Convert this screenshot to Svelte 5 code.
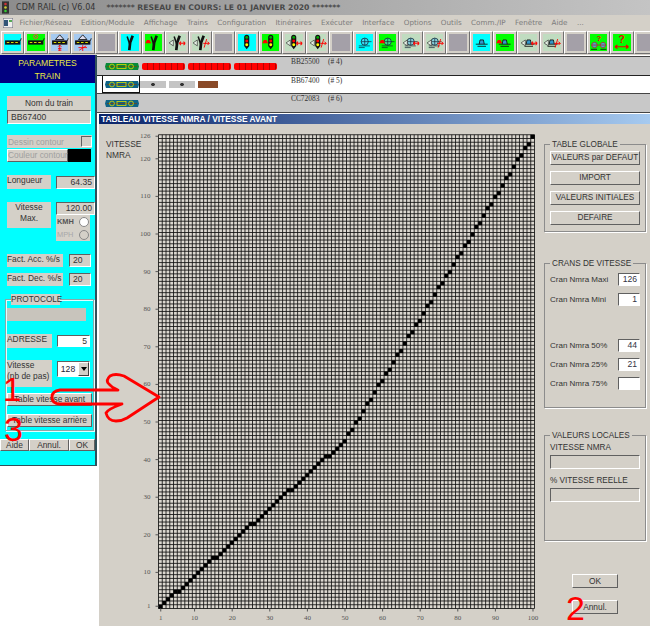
<script lang="ts">
	const menus = ['Fichier/Réseau', 'Edition/Module', 'Affichage', 'Trains', 'Configuration', 'Itinéraires', 'Exécuter', 'Interface', 'Options', 'Outils', 'Comm./IP', 'Fenêtre', 'Aide', '...'];

	// kind + tile colour + red overlay for each toolbar button
	const tools = [
		{ kind: 'loco', tile: 'cyan' },
		{ kind: 'loco', tile: 'green', over: 'stop' },
		{ kind: 'loco', tile: 'blue', over: 'up' },
		{ kind: 'loco', tile: 'blue', over: 'upx' },
		{ kind: 'none', tile: 'blank' },
		{ kind: 'point', tile: 'cyan' },
		{ kind: 'point', tile: 'green', over: 'hump' },
		{ kind: 'point', tile: 'sage', over: 'arrows' },
		{ kind: 'point', tile: 'sage', over: 'cross' },
		{ kind: 'none', tile: 'blank' },
		{ kind: 'signal', tile: 'cyan' },
		{ kind: 'signal', tile: 'green', over: 'hump' },
		{ kind: 'signal', tile: 'sage', over: 'arrows' },
		{ kind: 'signal', tile: 'sage', over: 'cross' },
		{ kind: 'none', tile: 'blank' },
		{ kind: 'wheel', tile: 'cyan' },
		{ kind: 'wheel', tile: 'green', over: 'hump' },
		{ kind: 'wheel', tile: 'sage', over: 'arrows' },
		{ kind: 'wheel', tile: 'sage', over: 'cross' },
		{ kind: 'none', tile: 'blank' },
		{ kind: 'bridge', tile: 'cyan' },
		{ kind: 'bridge', tile: 'green', over: 'hump' },
		{ kind: 'bridge', tile: 'sage', over: 'arrows' },
		{ kind: 'bridge', tile: 'sage', over: 'cross' },
		{ kind: 'none', tile: 'blank' },
		{ kind: 'wheels', tile: 'green' },
		{ kind: 'quest', tile: 'green' },
		{ kind: 'none', tile: 'blank' }
	];

	const step = 3.76;
	const left = 59.5;
	const bottom = 484.5;
	const top = bottom - 126 * step;
	const right = left + 100 * step;

	let grid = '';
	for (let i = 0; i <= 100; i++) grid += `M${left + i * step} ${top}V${bottom}`;
	for (let i = 0; i <= 126; i++) grid += `M${left} ${bottom - i * step}H${right}`;

	// speed curve, read off the picture
	const knots = [[1, 1], [10, 9], [20, 18], [30, 27], [40, 36], [50, 45], [100, 126]];
	function speed(x: number): number {
		for (let k = 1; k < knots.length; k++) {
			if (x <= knots[k][0]) {
				const [x0, y0] = knots[k - 1];
				const [x1, y1] = knots[k];
				return Math.round(y0 + ((x - x0) * (y1 - y0)) / (x1 - x0));
			}
		}
		return 126;
	}
	const cells = Array.from({ length: 100 }, (_, i) => ({ x: i + 1, y: speed(i + 1) }));

	const xTicks = [1, 10, 20, 30, 40, 50, 60, 70, 80, 90, 100];
	const yTicks = [1, 10, 20, 30, 40, 50, 60, 70, 80, 90, 100, 110, 120, 126];
	const xPos = (v: number) => left + (v - 0.4) * step;
	const yPos = (v: number) => bottom - (v - 0.4) * step;

	const crans = [
		{ label: 'Cran Nmra Maxi', value: '126', cls: 'c1' },
		{ label: 'Cran Nmra Mini', value: '1', cls: 'c2' },
		{ label: 'Cran Nmra 50%', value: '44', cls: 'c3' },
		{ label: 'Cran Nmra 25%', value: '21', cls: 'c4' },
		{ label: 'Cran Nmra 75%', value: '', cls: 'c4' }
	];
</script>

{#snippet overlay(over)}
	{#if over === 'hump'}
		<path d="M0 11 L2 7 H5 L7 11 Z" fill="#f00" />
	{:else if over === 'arrows'}
		<path d="M13 11H20M13 11l2-2M13 11l2 2M20 11l-2-2M20 11l-2 2" stroke="#f00" fill="none" stroke-width="1.2" />
		<path d="M6 7 L1 10.5 L6 14 Z" stroke="#333" fill="#e4f0e4" stroke-width="0.8" />
	{:else if over === 'cross'}
		<path d="M13 11H20M20 11l-2-2M20 11l-2 2M17 6 L14 16" stroke="#f00" fill="none" stroke-width="1.1" />
		<path d="M6 7 L1 10.5 L6 14 Z" stroke="#333" fill="#e4f0e4" stroke-width="0.8" />
	{:else if over === 'up'}
		<path d="M10 13V20M8 15l2-2l2 2M8 17H12M8 19H12" stroke="#f00" fill="none" />
	{:else if over === 'upx'}
		<path d="M10 13V20M5 16H15M14 14L6 19" stroke="#f00" fill="none" />
	{:else if over === 'stop'}
		<circle cx="10" cy="3" r="2.5" stroke="#e44" fill="none" />
		<path d="M8 1.5 L12 4.5" stroke="#e44" stroke-width="0.7" />
	{/if}
{/snippet}

{#snippet icon(tool)}
	<svg viewBox="0 0 20 20" class="tool-icon" aria-hidden="true">
		{#if tool.kind === 'loco'}
			{#if tool.over === 'up' || tool.over === 'upx'}
				<path d="M10 1 L5 6.5 H15 Z" fill="#dde" stroke="#111" />
			{/if}
			<rect x="1" y="7.5" width="18" height="5" fill="#111" />
			<path d="M19 8 L20 5" stroke="#111" />
			<path d="M3 10H6M8 10H11M13 10H16" stroke="#dd0" stroke-width="1.2" />
		{:else if tool.kind === 'point'}
			<path d="M9.5 19 L10.5 10 L13.5 2" fill="none" stroke="#111" stroke-width="3.2" />
			<path d="M7 3 L10 12" fill="none" stroke="#111" stroke-width="1.8" />
		{:else if tool.kind === 'signal'}
			<path d="M7 4 Q7 1 10 1 Q13 1 13 4 V14 L10 18 L7 14 Z" fill="#111" />
			<circle cx="10" cy="4" r="1.7" fill="#0a0" />
			<circle cx="10" cy="8.3" r="1.7" fill="#f00" />
			<circle cx="10" cy="12.6" r="1.7" fill="#ff0" />
		{:else if tool.kind === 'wheel'}
			<circle cx="10" cy="9" r="4.2" fill="#6ce" fill-opacity="0.6" stroke="#123" stroke-width="0.9" />
			<path d="M3 14H16M6 9H18M3 16H10M10 5V13" stroke="#123" fill="none" stroke-width="0.8" />
		{:else if tool.kind === 'bridge'}
			<path d="M7 12 L8 7 H12 L13 12" fill="#39c" stroke="#111" />
			<path d="M3 12H17M5 14.5H15" stroke="#111" />
		{:else if tool.kind === 'wheels'}
			<circle cx="5" cy="13" r="3.2" fill="#4ac" stroke="#a33" />
			<circle cx="15" cy="13" r="3.2" fill="#4ac" stroke="#a33" />
			<path d="M1 13H19" stroke="#a33" />
			<path d="M1 18H8M12 18H19" stroke="#111" />
			<text x="10" y="8" class="quest small">?</text>
		{:else if tool.kind === 'quest'}
			<text x="10" y="11" class="quest">?</text>
			<path d="M2 15H18M2 15l3-2M2 15l3 2M18 15l-3-2M18 15l-3 2" stroke="#e00" fill="none" stroke-width="1.4" />
		{/if}
		{@render overlay(tool.over)}
	</svg>
{/snippet}

{#snippet pill(color)}
	<svg class="pill" viewBox="0 0 34 7" aria-hidden="true">
		<path d="M1 0H33L34 3.5L33 7H1L0 3.5Z" fill={color} />
		<path d="M2 3.5H32" stroke="#8a3a00" stroke-width="0.6" />
		<circle cx="7" cy="3.5" r="2.4" fill="none" stroke="#dd0" stroke-width="0.8" />
		<rect x="12" y="1.5" width="9" height="4" fill="none" stroke="#dd0" stroke-width="0.8" />
		<circle cx="26" cy="3.5" r="2.4" fill="none" stroke="#dd0" stroke-width="0.8" />
	</svg>
{/snippet}

<div class="screen">
	<div class="title-bar">
		<svg class="app-icon" viewBox="0 0 8 14" aria-hidden="true">
			<rect width="8" height="14" fill="#333" />
			<circle cx="4" cy="3" r="1.5" fill="#c33" />
			<circle cx="4" cy="7" r="1.5" fill="#cc3" />
			<circle cx="4" cy="11" r="1.5" fill="#3c3" />
		</svg>
		<span class="app-name">CDM RAIL (c) V6.04</span>
		<span class="app-state">******* RESEAU EN COURS: LE 01 JANVIER 2020 *******</span>
	</div>

	<div class="menu-bar">
		<svg class="menu-icon" viewBox="0 0 10 10" aria-hidden="true">
			<rect width="10" height="10" fill="#eee" stroke="#667" />
			<rect x="1" y="2" width="4" height="6" fill="#357" />
			<rect x="6" y="2" width="3" height="2" fill="#5a5" />
		</svg>
		{#each menus as item}
			<span class="menu-item">{item}</span>
		{/each}
	</div>

	<div class="toolbar">
		{#each tools as tool}
			<div class="tool">
				<div class="tile {tool.tile}">
					{#if tool.kind !== 'none'}
						{@render icon(tool)}
					{/if}
				</div>
			</div>
		{/each}
	</div>

	<div class="main">
		<aside class="panel">
			<header class="panel-head">PARAMETRES<br />TRAIN</header>
			<div class="panel-body">
				<div class="lbl center name-label">Nom du train</div>
				<div class="field name-input">BB67400</div>

				<div class="contour off">
					<span>Dessin contour</span>
					<span class="check"></span>
				</div>
				<div class="colour">
					<div class="btn off colour-btn">Couleur contour</div>
					<div class="swatch"></div>
				</div>

				<div class="line len">
					<div class="lbl w45">Longueur</div>
					<div class="field right len-input">64.35</div>
				</div>

				<div class="line vmax">
					<div class="lbl w45 center tall">Vitesse<br />Max.</div>
					<div class="vcol">
						<div class="field right len-input">120.00</div>
						<div class="radios">
							<div class="radio-row">KMH<span class="radio on"></span></div>
							<div class="radio-row off">MPH<span class="radio"></span></div>
						</div>
					</div>
				</div>

				<div class="line fact first">
					<div class="lbl w56">Fact. Acc. %/s</div>
					<div class="field small-input">20</div>
				</div>
				<div class="line fact second">
					<div class="lbl w56">Fact. Dec. %/s</div>
					<div class="field small-input">20</div>
				</div>

				<div class="proto">
					<div class="proto-legend">PROTOCOLE</div>
					<div class="proto-bar"></div>
					<div class="line addr">
						<div class="lbl w45">ADRESSE</div>
						<div class="field white right addr-input">5</div>
					</div>
					<div class="line steps">
						<div class="lbl w45 tall">Vitesse<br />(nb de pas)</div>
						<div class="combo">
							<span class="combo-val">128</span>
							<span class="combo-btn"></span>
						</div>
					</div>
					<div class="btn wide table-a">Table vitesse avant</div>
					<div class="btn wide table-b">Table vitesse arrière</div>
				</div>

				<div class="panel-foot">
					<div class="btn f1">Aide</div>
					<div class="btn f2">Annul.</div>
					<div class="btn f3">OK</div>
				</div>
			</div>
		</aside>

		<div class="work">
			<div class="train-row first-row">
				<div class="cars">
					{@render pill('#0a8a3a')}
					<span class="red-car"></span>
					<span class="red-car"></span>
					<span class="red-car"></span>
				</div>
				<span class="tname">BB25500</span>
				<span class="tnum">(# 4)</span>
			</div>
			<div class="train-row sel">
				<div class="cars">
					<div class="sel-box">{@render pill('#0f6487')}</div>
					<span class="wagon"></span>
					<span class="wagon"></span>
					<span class="brown"></span>
				</div>
				<span class="tname">BB67400</span>
				<span class="tnum">(# 5)</span>
			</div>
			<div class="train-row last">
				<div class="cars">{@render pill('#0f6487')}</div>
				<span class="tname">CC72083</span>
				<span class="tnum">(# 6)</span>
			</div>

			<section class="window">
				<div class="win-title">TABLEAU VITESSE NMRA / VITESSE AVANT</div>
				<div class="win-body">
					<svg class="chart" viewBox="0 0 445 502" width="445" height="502" aria-label="Courbe vitesse">
						<text x="7" y="23" class="axis-name">VITESSE</text>
						<text x="7" y="34" class="axis-name">NMRA</text>
						<rect x={left} y={top} width={right - left} height={bottom - top} fill="#dcd8d0" />
						<path d={grid} stroke="#111" stroke-width="0.85" fill="none" />
						{#each cells as cell}
							<rect x={left + (cell.x - 1) * step} y={bottom - cell.y * step} width={step + 0.2} height={step + 0.2} fill="#000" />
						{/each}
						{#each xTicks as t}
							<path d="M{xPos(t)} {bottom}v3" stroke="#555" />
							<text x={xPos(t)} y={bottom + 11} class="tick mid">{t}</text>
						{/each}
						{#each yTicks as t}
							<path d="M{left - 3} {yPos(t)}h3" stroke="#555" />
							<text x={left - 8} y={yPos(t) + 2} class="tick end">{t}</text>
						{/each}
					</svg>

					<div class="side">
						<fieldset class="box global">
							<legend>TABLE GLOBALE</legend>
							<div class="btn big">VALEURS par DEFAUT</div>
							<div class="btn big">IMPORT</div>
							<div class="btn big">VALEURS INITIALES</div>
							<div class="btn big">DEFAIRE</div>
						</fieldset>

						<fieldset class="box crans">
							<legend>CRANS DE VITESSE</legend>
							{#each crans as c}
								<div class="cran {c.cls}">
									<span>{c.label}</span>
									<div class="field white right cran-input">{c.value}</div>
								</div>
							{/each}
						</fieldset>

						<fieldset class="box locales">
							<legend>VALEURS LOCALES</legend>
							<div class="loc-label">VITESSE NMRA</div>
							<div class="field loc-field"></div>
							<div class="loc-label second-loc">% VITESSE REELLE</div>
							<div class="field loc-field"></div>
						</fieldset>

						<div class="btn act ok">OK</div>
						<div class="btn act annul">Annul.</div>
					</div>
				</div>
			</section>
		</div>
	</div>

	<!-- red annotations drawn over the screenshot -->
	<svg class="arrow" viewBox="0 0 650 626" aria-hidden="true">
		<path d="M118 390 H60 Q52 391 52 397 Q52 404 60 404 H122 Q108 409 106 413 Q108 421 116 421 Q122 421 127 418 L159 397 L124 376 Q115 373 110 376 Q106 380 108 383 Q112 388 118 390 Z" fill="none" stroke="#f00" stroke-width="2.8" stroke-linejoin="round" />
	</svg>
	<span class="mark m1">1</span>
	<span class="mark m3">3</span>
	<span class="mark m2">2</span>
</div>

<style>
	:global(body) {
		margin: 0;
		background: #fff;
	}

	.screen {
		position: relative;
		width: 650px;
		height: 626px;
		overflow: hidden;
		background: #fff;
		font-family: "Liberation Sans", Arial, sans-serif;
		font-size: 9px;
		color: #333;
	}

	.title-bar {
		height: 15px;
		display: flex;
		align-items: center;
		background: linear-gradient(90deg, #8c8c8c, #c4c4c4);
		font-family: "DejaVu Sans", sans-serif;
		font-size: 8px;
		white-space: nowrap;
	}

	.app-icon {
		width: 7px;
		height: 13px;
		margin: 0 7px 0 2px;
	}

	.app-name {
		color: #333;
		letter-spacing: 0.1px;
	}

	.app-state {
		margin-left: 11px;
		color: #484848;
		font-size: 7.7px;
		font-weight: bold;
	}

	.menu-bar {
		height: 15px;
		display: flex;
		align-items: center;
		gap: 9.4px;
		background: #d4d0c8;
		color: #7c7c7c;
		font-family: "DejaVu Sans", sans-serif;
		font-size: 7.2px;
		white-space: nowrap;
	}

	.menu-icon {
		width: 10px;
		height: 10px;
		margin: 0 -3px 0 3px;
	}

	.toolbar {
		height: 25px;
		display: flex;
		padding: 1px 0 0 1px;
		background: #d4d0c8;
		box-sizing: border-box;
	}

	.tool {
		flex: 0 0 23.45px;
		box-sizing: border-box;
		height: 23px;
		border: 1px solid;
		border-color: #fff #707070 #707070 #fff;
		padding: 2px;
	}

	.tile {
		width: 100%;
		height: 100%;
	}

	.cyan { background: #00ffff; }
	.green { background: #00ff00; }
	.blue { background: #a6caf0; }
	.sage { background: #c0dcc0; }
	.blank { background: #a4a0a8; }

	.tool-icon {
		display: block;
		width: 100%;
		height: 100%;
		overflow: visible;
	}

	.quest {
		font-family: "Liberation Sans", sans-serif;
		font-size: 12px;
		font-weight: bold;
		fill: #e00;
		text-anchor: middle;
	}

	.quest.small {
		font-size: 9px;
	}

	.main {
		display: flex;
		align-items: flex-start;
	}

	.panel {
		flex: 0 0 95px;
		width: 95px;
		height: 410px;
		box-sizing: content-box;
		background: #00ffff;
		border-right: 2px solid #30505a;
		border-bottom: 1px solid #30505a;
	}

	.panel-head {
		height: 28px;
		padding-top: 2px;
		box-sizing: border-box;
		background: #000080;
		color: #e8e840;
		text-align: center;
		font-size: 8.6px;
		line-height: 13px;
	}

	.panel-body {
		padding-left: 7px;
	}

	.lbl {
		box-sizing: border-box;
		background: #d4d0c8;
		font-size: 8.4px;
		line-height: 11px;
		white-space: nowrap;
	}

	.center { text-align: center; }
	.w45 { width: 45px; height: 14px; }
	.w56 { width: 56px; height: 13px; }
	.tall { height: 26px; }

	.field {
		box-sizing: border-box;
		background: #d4d0c8;
		border: 1px solid;
		border-color: #606060 #fff #fff #606060;
		padding: 0 2px;
		font-size: 8.6px;
		line-height: 11px;
		white-space: nowrap;
	}

	.white { background: #fff; }
	.right { text-align: right; }

	.name-label {
		margin-top: 13px;
		width: 84px;
		height: 14px;
		line-height: 14px;
	}

	.name-input {
		width: 84px;
		height: 14px;
		padding-left: 3px;
		line-height: 12px;
	}

	.off { color: #a0a0a0; }

	.contour {
		margin-top: 11px;
		width: 85px;
		height: 13px;
		display: flex;
		justify-content: space-between;
		align-items: center;
		padding-left: 1px;
		box-sizing: border-box;
		background: #d4d0c8;
		font-size: 8.4px;
	}

	.check {
		width: 9px;
		height: 9px;
		border: 1px solid;
		border-color: #606060 #fff #fff #606060;
	}

	.colour {
		margin-top: 1px;
		display: flex;
		height: 13px;
		width: 84px;
	}

	.colour-btn {
		width: 61px;
	}

	.swatch {
		flex: 1;
		background: #000;
	}

	.btn {
		box-sizing: border-box;
		background: #d4d0c8;
		border: 1px solid;
		border-color: #fff #606060 #606060 #fff;
		text-align: center;
		font-size: 8.4px;
		line-height: 11px;
		white-space: nowrap;
	}

	.line {
		display: flex;
		align-items: flex-start;
	}

	.len {
		margin-top: 13px;
	}

	.len-input {
		margin: 1px 0 0 5px;
		width: 39px;
		height: 13px;
	}

	.vmax {
		margin-top: 13px;
	}

	.vcol {
		margin-left: 5px;
		width: 39px;
	}

	.vcol .len-input {
		margin: 0;
	}

	.radios {
		width: 34px;
		height: 26px;
		background: #d4d0c8;
	}

	.radio-row {
		height: 13px;
		display: flex;
		justify-content: space-between;
		align-items: center;
		padding: 0 1px;
		font-size: 7.4px;
		font-weight: bold;
		color: #555;
	}

	.radio-row.off {
		color: #a8a8a8;
		font-weight: normal;
	}

	.radio {
		width: 8px;
		height: 8px;
		border-radius: 50%;
		border: 1px solid #888;
	}

	.radio.on {
		background: #fff;
	}

	.fact.first {
		margin-top: 13px;
	}

	.fact.second {
		margin-top: 6px;
	}

	.small-input {
		margin-left: 6px;
		width: 22px;
		height: 13px;
		padding-left: 3px;
	}

	.proto {
		margin: 13px 0 0 -2px;
		width: 89px;
		height: 132px;
		box-sizing: border-box;
		border: 1px solid #8aa8a8;
		box-shadow: 1px 1px 0 #e0ffff, inset 1px 1px 0 #e0ffff;
		padding-left: 1px;
	}

	.proto-legend {
		margin: -6px 0 0 4px;
		width: 49px;
		height: 11px;
		background: #d4d0c8;
		text-align: center;
		font-size: 8.2px;
		line-height: 11px;
	}

	.proto-bar {
		margin-top: 3px;
		width: 79px;
		height: 13px;
		background: #c8c4bc;
	}

	.addr {
		margin-top: 13px;
	}

	.addr-input {
		margin: 1px 0 0 5px;
		width: 33px;
		height: 12px;
	}

	.steps {
		margin-top: 12px;
	}

	.steps .tall {
		height: 27px;
	}

	.combo {
		margin: 1px 0 0 5px;
		width: 33px;
		height: 16px;
		box-sizing: border-box;
		display: flex;
		align-items: center;
		background: #fff;
		font-size: 8.6px;
		color: #223;
		border: 1px solid;
		border-color: #606060 #fff #fff #606060;
	}

	.combo-val {
		flex: 1;
		text-align: center;
	}

	.combo-btn {
		position: relative;
		width: 11px;
		height: 14px;
		box-sizing: border-box;
		background: #d4d0c8;
		border: 1px solid;
		border-color: #fff #404040 #404040 #fff;
	}

	.combo-btn::after {
		content: "";
		position: absolute;
		left: 1.5px;
		top: 4px;
		border: 3px solid transparent;
		border-top: 4px solid #000;
		border-bottom: 0;
	}

	.wide {
		width: 85px;
		height: 13px;
	}

	.table-a {
		margin-top: 6px;
	}

	.table-b {
		margin-top: 8px;
	}

	.panel-foot {
		margin: 8px 0 0 -7px;
		display: flex;
		height: 12px;
	}

	.f1 { width: 29px; }
	.f2 { width: 40px; }
	.f3 { width: 26px; }

	.work {
		flex: 1;
		min-width: 0;
		padding-top: 1px;
	}

	.train-row {
		height: 18px;
		box-sizing: border-box;
		border-top: 1px solid #444;
		display: flex;
		background: #c8c8c8;
		font-family: "Liberation Serif", serif;
		font-size: 7.4px;
		line-height: 9px;
		color: #333;
	}

	.train-row.first-row {
		height: 19px;
	}

	.train-row.sel {
		background: #fff;
		border-top: 1px solid #222;
	}

	.train-row.last {
		border-bottom: 1px solid #444;
		height: 20px;
	}

	.cars {
		width: 194px;
		padding: 6px 0 0 8px;
		box-sizing: border-box;
		display: flex;
		align-items: flex-start;
		gap: 3px;
	}

	.sel .cars {
		padding-top: 0;
	}

	.sel-box {
		margin: 0 -3px 0 -3px;
		padding: 5px 2px 0;
		width: 38px;
		height: 17px;
		box-sizing: border-box;
		border: 1px solid #111;
		border-top: 0;
	}

	.pill {
		display: block;
		flex: none;
		width: 34px;
		height: 7px;
	}

	.red-car {
		width: 43px;
		height: 7px;
		border-radius: 2px;
		background: repeating-linear-gradient(90deg, #f00 0 5px, #b40000 5px 6px);
	}

	.wagon,
	.brown {
		margin-top: 5px;
		height: 7px;
		width: 26px;
		background: radial-gradient(circle, #333 1.5px, transparent 2px), #c4c4c4;
	}

	.brown {
		width: 20px;
		background: #8a4a28;
	}

	.tname {
		width: 37px;
	}

	.window {
		margin: 1px 0 0 2px;
	}

	.win-title {
		height: 10px;
		padding-left: 2px;
		background: linear-gradient(90deg, #0a246a, #a6caf0);
		color: #fff;
		font-size: 8.4px;
		font-weight: bold;
		line-height: 11px;
		white-space: nowrap;
	}

	.win-body {
		display: flex;
		height: 502px;
		background: #d4d0c8;
	}

	.chart {
		flex: none;
		display: block;
	}

	.axis-name {
		font-family: "Liberation Sans", sans-serif;
		font-size: 8.4px;
		fill: #333;
	}

	.tick {
		font-family: "Liberation Serif", serif;
		font-size: 7px;
		fill: #555;
	}

	.mid { text-anchor: middle; }
	.end { text-anchor: end; }

	.side {
		flex: 1;
		min-width: 0;
	}

	.box {
		margin: 0;
		width: 102px;
		box-sizing: border-box;
		border: 1px solid #8c8c8c;
		box-shadow: 1px 1px 0 #fff;
		padding: 0 5px;
		min-inline-size: 0;
	}

	.box legend {
		padding: 0 2px;
		font-size: 8.2px;
		line-height: 9px;
	}

	.global {
		margin-top: 16px;
		height: 92px;
		padding-top: 2px;
	}

	.big {
		width: 90px;
		height: 14px;
		margin-bottom: 6px;
		line-height: 12px;
		font-size: 8.2px;
	}

	.crans {
		margin-top: 27px;
		height: 149px;
		padding-top: 5px;
	}

	.cran {
		display: flex;
		justify-content: space-between;
		align-items: center;
		width: 90px;
		height: 13px;
		font-size: 8px;
	}

	.c2 { margin-top: 7px; }
	.c3 { margin-top: 33px; }
	.c4 { margin-top: 6px; }

	.cran-input {
		width: 22px;
		height: 13px;
		padding-left: 2px;
		color: #334;
	}

	.locales {
		margin-top: 23px;
		height: 110px;
		padding-top: 3px;
	}

	.loc-label {
		font-size: 8.2px;
		line-height: 10px;
		white-space: nowrap;
	}

	.second-loc {
		margin-top: 7px;
	}

	.loc-field {
		margin-top: 2px;
		width: 90px;
		height: 14px;
	}

	.act {
		width: 46px;
		height: 14px;
		line-height: 12px;
		margin-left: 28px;
		font-size: 8.4px;
	}

	.ok {
		margin-top: 33px;
	}

	.annul {
		margin-top: 12px;
	}

	.arrow {
		position: absolute;
		left: 0;
		top: 0;
		width: 650px;
		height: 626px;
		pointer-events: none;
	}

	.mark {
		position: absolute;
		color: #f00;
		font-size: 34px;
		line-height: 34px;
	}

	.m1 { left: 3px; top: 373px; font-size: 33px; }
	.m3 { left: 4px; top: 412px; }
	.m2 { left: 566px; top: 591px; }
</style>
